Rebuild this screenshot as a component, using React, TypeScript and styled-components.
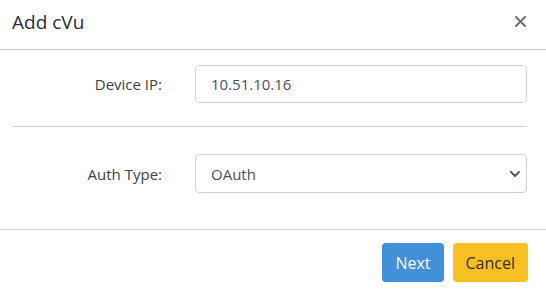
import React from "react";
import styled, { createGlobalStyle } from "styled-components";

const GlobalStyle = createGlobalStyle`
  html, body {
    margin: 0;
    padding: 0;
    background: #ffffff;
  }
  body {
    font-family: "Open Sans", "Noto Sans", Arial, sans-serif;
    color: #212529;
  }
`;

const Modal = styled.div`
  width: 546px;
  height: 292px;
  background: #fff;
  display: flex;
  flex-direction: column;
  overflow: hidden;
`;

const Header = styled.div`
  height: 50px;
  border-bottom: 1px solid #c9ced3;
  display: flex;
  align-items: center;
  justify-content: space-between;
  padding: 0 19px 0 12px;
  box-sizing: border-box;
  flex-shrink: 0;
`;

const Title = styled.h5`
  margin: 0;
  font-size: 19px;
  font-weight: 400;
  color: #2a2d31;
  line-height: 1;
  margin-top: -5px;
`;

const CloseButton = styled.button`
  border: 0;
  background: none;
  padding: 0;
  width: 14px;
  height: 14px;
  display: flex;
  align-items: center;
  justify-content: center;
  margin-top: -6px;
  cursor: pointer;
`;

const Body = styled.div`
  padding: 15px 19px 0 12px;
  height: 180px;
  box-sizing: border-box;
  border-bottom: 1px solid #cfd3d6;
  flex-shrink: 0;
`;

const Row = styled.div`
  display: grid;
  grid-template-columns: 150px 1fr;
  column-gap: 33px;
  align-items: center;
`;

const Label = styled.label`
  text-align: right;
  font-size: 15px;
  color: #3b3f44;
`;

const fieldBase = `
  height: 38px;
  box-sizing: border-box;
  border: 1px solid #ced4da;
  border-radius: 4px;
  padding: 0 15px;
  font-family: "Open Sans", "Noto Sans", Arial, sans-serif;
  font-size: 15px;
  color: #495057;
  background: #fff;
  display: flex;
  align-items: center;
`;

const Input = styled.div`
  ${fieldBase}
`;

const Select = styled.div`
  ${fieldBase}
  height: 39px;
  justify-content: space-between;
  padding-right: 6px;
`;

const Divider = styled.hr`
  border: 0;
  border-top: 1px solid #cfd3d6;
  margin: 23px 0 27px 0;
`;

const Footer = styled.div`
  display: flex;
  justify-content: flex-end;
  gap: 9px;
  padding: 13px 18px 0 0;
`;

const Button = styled.button<{ $variant: "primary" | "warning" }>`
  height: 39px;
  border: 0;
  border-radius: 4px;
  font-family: "Open Sans", "Noto Sans", Arial, sans-serif;
  font-size: 16px;
  padding: 0 13px;
  background: ${(p) => (p.$variant === "primary" ? "#4190d8" : "#f8c022")};
  color: ${(p) => (p.$variant === "primary" ? "#ffffff" : "#2f2f2f")};
  cursor: pointer;
`;

export default function App() {
  return (
    <>
      <GlobalStyle />
      <Modal>
        <Header>
          <Title>Add cVu</Title>
          <CloseButton aria-label="Close">
            <svg width="11" height="11" viewBox="0 0 11 11">
              <path d="M1 1 L10 10 M10 1 L1 10" stroke="#6c6f73" strokeWidth="2" strokeLinecap="round" />
            </svg>
          </CloseButton>
        </Header>
        <Body>
          <Row>
            <Label>Device IP:</Label>
            <Input>10.51.10.16</Input>
          </Row>
          <Divider />
          <Row>
            <Label>Auth Type:</Label>
            <Select>
              <span>OAuth</span>
              <svg width="10" height="6" viewBox="0 0 10 6">
                <path d="M1 1 L5 5 L9 1" fill="none" stroke="#4d5258" strokeWidth="1.8" strokeLinecap="round" strokeLinejoin="round" />
              </svg>
            </Select>
          </Row>
        </Body>
        <Footer>
          <Button $variant="primary">Next</Button>
          <Button $variant="warning">Cancel</Button>
        </Footer>
      </Modal>
    </>
  );
}
